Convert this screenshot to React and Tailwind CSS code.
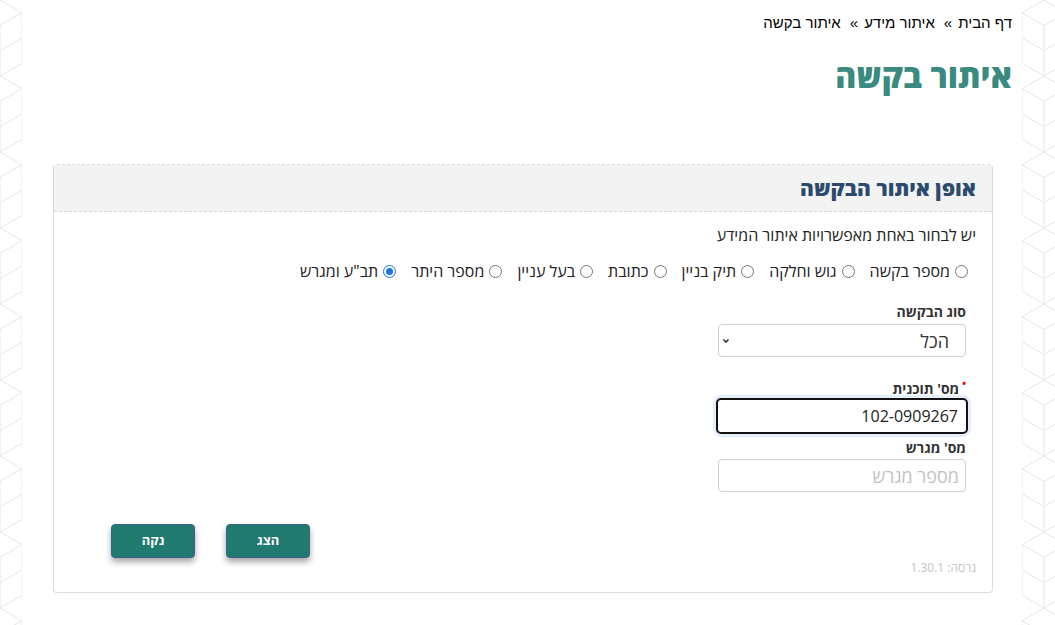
import React from "react";

function CubePattern({ width, offset = 0 }) {
  const id = `cubes-${width}-${offset}`;
  return (
    <svg width={width} height="625" className="block">
      <defs>
        <pattern id={id} x={offset} y="0" width="44" height="76" patternUnits="userSpaceOnUse">
          <g fill="none" stroke="#e6e6e6" strokeWidth="1">
            <path d="M22 0 L44 12.7 L44 38 L22 50.7 L0 38 L0 12.7 Z" />
            <path d="M22 25.3 L44 12.7 M22 25.3 L0 12.7 M22 25.3 L22 50.7" />
            <path d="M0 38 L0 63.3 L22 76 M44 38 L44 63.3 L22 76 M22 50.7 L22 76" />
          </g>
        </pattern>
      </defs>
      <rect width={width} height="625" fill={`url(#${id})`} />
    </svg>
  );
}

function Radio({ label, checked }) {
  return (
    <label className="flex items-center gap-[5px]">
      {checked ? (
        <span className="w-[13px] h-[13px] rounded-full border border-[#1a73e8] flex items-center justify-center bg-white">
          <span className="w-[7px] h-[7px] rounded-full bg-[#1a73e8]" />
        </span>
      ) : (
        <span className="w-[13px] h-[13px] rounded-full border border-[#767676] bg-white" />
      )}
      <span className="text-[16px] text-[#222] leading-[20px]">{label}</span>
    </label>
  );
}

export default function App() {
  const radios = [
    ["מספר בקשה", false],
    ["גוש וחלקה", false],
    ["תיק בניין", false],
    ["כתובת", false],
    ["בעל עניין", false],
    ["מספר היתר", false],
    ['תב"ע ומגרש', true],
  ];
  return (
    <div
      className="w-[1055px] h-[625px] bg-white flex overflow-hidden"
      style={{ fontFamily: '"Open Sans", "Liberation Sans", "DejaVu Sans", sans-serif' }}
    >
      <div className="w-[22px] shrink-0">
        <CubePattern width={22} offset={-22} />
      </div>
      <div className="flex-1 flex flex-col" dir="rtl">
        <div
          className="pr-[10px] pt-[13px] text-[15px] text-black leading-[20px] flex gap-[6px]"
          style={{ fontFamily: '"Liberation Sans", sans-serif' }}
        >
          <span>דף הבית</span>
          <span>&#187;</span>
          <span className="mr-[3px]">איתור מידע</span>
          <span>&#187;</span>
          <span className="mr-[3px]">איתור בקשה</span>
        </div>
        <h1 className="pr-[10px] mt-[21px] text-[32px] font-extrabold text-[#3a8a80] leading-[44px]">איתור בקשה</h1>

        <div className="mt-[66px] mr-[29px] ml-[31px] h-[429px] border border-[#dcdcdc] [border-top-style:dashed] rounded-[4px] flex flex-col">
          <div className="h-[47px] bg-[#f3f3f3] border-b border-dashed border-[#d6d6d6] flex items-center pr-[16px]">
            <h2 className="text-[21px] font-extrabold text-[#2b4a6e] leading-none">אופן איתור הבקשה</h2>
          </div>
          <div className="flex flex-col pr-[16px] pt-[13px] flex-1">
            <p className="text-[16px] text-[#222] leading-[20px]">יש לבחור באחת מאפשרויות איתור המידע</p>
            <div className="flex items-center gap-[15px] mt-[16px] pr-[8px]">
              {radios.map(([l, c]) => (
                <Radio key={l} label={l} checked={c} />
              ))}
            </div>
            <div className="flex flex-col pr-[10px] w-[258px] mt-[22px]">
              <label className="text-[14px] font-bold text-[#333] leading-[18px]">סוג הבקשה</label>
              <div className="mt-[3px] h-[33px] border border-[#cfcfcf] rounded-[4px] flex items-center justify-between pr-[16px] pl-[3px]">
                <span className="text-[18px] text-[#333] leading-none">הכל</span>
                <svg width="8" height="8" viewBox="0 0 8 8">
                  <path d="M1.5 2.5 L4 5 L6.5 2.5" fill="none" stroke="#333" strokeWidth="1.6" />
                </svg>
              </div>
              <label className="mt-[23px] text-[14px] font-bold text-[#333] leading-[18px] flex items-start gap-[3px]">
                <span className="text-[#e00] text-[10px] leading-[10px] -mt-[2px]">•</span>
                <span>מס' תוכנית</span>
              </label>
              <div className="-mx-[2px] h-[36px] border-2 border-[#111] rounded-[5px] flex items-center pr-[8px] shadow-[0_0_0_3px_rgba(180,205,240,0.35)]">
                <span className="text-[16px] text-[#222]" dir="ltr">102-0909267</span>
              </div>
              <label className="mt-[5px] text-[14px] font-bold text-[#333] leading-[18px]">מס' מגרש</label>
              <div className="mt-[2px] h-[33px] border border-[#cfcfcf] rounded-[4px] flex items-center pr-[6px]">
                <span className="text-[18px] text-[#c2c2c2] leading-none">מספר מגרש</span>
              </div>
            </div>
            <div className="flex justify-end gap-[31px] pl-[57px] mt-[32px]">
              <button className="w-[84px] h-[34px] bg-[#217a70] border border-[#3d5f8a] rounded-[4px] text-white text-[13px] font-bold shadow-[0_4px_6px_rgba(0,0,0,0.35)]">הצג</button>
              <button className="w-[84px] h-[34px] bg-[#217a70] border border-[#3d5f8a] rounded-[4px] text-white text-[13px] font-bold shadow-[0_4px_6px_rgba(0,0,0,0.35)]">נקה</button>
            </div>
            <p className="mt-[2px] text-[12px] text-[#c4c4c4] leading-[16px]">גרסה: 1.30.1</p>
          </div>
        </div>
      </div>
      <div className="w-[33px] shrink-0">
        <CubePattern width={33} offset={0} />
      </div>
    </div>
  );
}
